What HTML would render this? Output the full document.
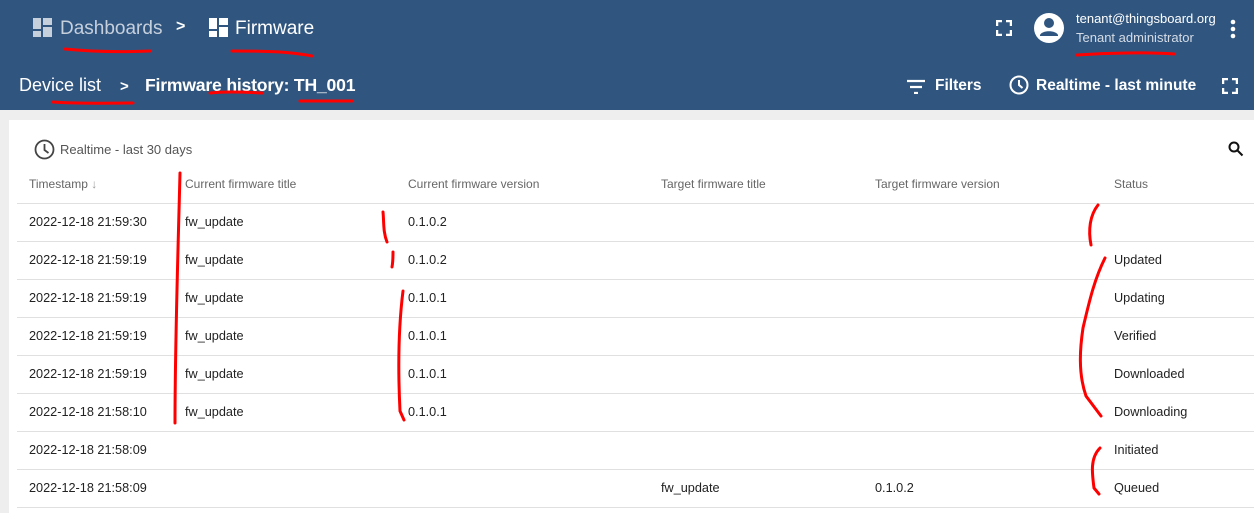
<!DOCTYPE html>
<html><head><style>
html,body{margin:0;width:1254px;height:513px;overflow:hidden;background:#eee;font-family:"Liberation Sans",sans-serif;position:relative}
.bar{position:absolute;left:0;top:0;width:1254px;height:110px;background:#305680;color:#fff}
.t{position:absolute;white-space:nowrap}
.card{position:absolute;left:9px;top:120px;width:1245px;height:393px;background:#fff}
.row{position:absolute;left:17px;width:1237px;border-top:1px solid #e0e0e0;height:37px}
.c{position:absolute;font-size:12.7px;color:#222;white-space:nowrap}
.h{position:absolute;font-size:12px;color:#666;top:177px;white-space:nowrap}
</style></head><body>
<div class="bar">
<svg class="t" style="left:33px;top:18px" width="20" height="20"><rect x="0" y="0" width="8" height="11" fill="#c6cfdc"/><rect x="10" y="0" width="9" height="7" fill="#c6cfdc"/><rect x="0" y="13" width="8" height="6" fill="#c6cfdc"/><rect x="10" y="9" width="9" height="10" fill="#c6cfdc"/></svg>
<div class="t" style="left:60px;top:18px;font-size:19px;color:#c6cfdc">Dashboards</div>
<div class="t" style="left:176px;top:18px;font-size:16px;font-weight:bold">&gt;</div>
<svg class="t" style="left:209px;top:18px" width="20" height="20"><rect x="0" y="0" width="8" height="11" fill="#fff"/><rect x="10" y="0" width="9" height="7" fill="#fff"/><rect x="0" y="13" width="8" height="6" fill="#fff"/><rect x="10" y="9" width="9" height="10" fill="#fff"/></svg>
<div class="t" style="left:235px;top:18px;font-size:19px">Firmware</div>
<div class="t" style="left:19px;top:75px;font-size:18px">Device list</div>
<div class="t" style="left:120px;top:78px;font-size:15px;font-weight:bold">&gt;</div>
<div class="t" style="left:145px;top:75px;font-size:17.6px;font-weight:bold;letter-spacing:-0.2px">Firmware history: TH_001</div>
<svg class="t" style="left:996px;top:20px" width="16" height="16" fill="none" stroke="#fff" stroke-width="2.5"><path d="M1 6V1h5M10 1h5v5M15 10v5h-5M6 15H1v-5"/></svg>
<svg class="t" style="left:1033px;top:12px" width="32" height="32"><circle cx="16" cy="16" r="15" fill="#fff"/><circle cx="16" cy="11" r="5" fill="#305680"/><path d="M7 23c2-5 16-5 18 0v1H7z" fill="#305680"/></svg>
<div class="t" style="left:1076px;top:11px;font-size:13px">tenant@thingsboard.org</div>
<div class="t" style="left:1076px;top:30px;font-size:13px;color:#d5dce6">Tenant administrator</div>
<svg class="t" style="left:1229px;top:19px" width="8" height="20" fill="#fff"><circle cx="4" cy="3" r="2.3"/><circle cx="4" cy="10" r="2.3"/><circle cx="4" cy="17" r="2.3"/></svg>
<svg class="t" style="left:906px;top:78px" width="20" height="16" stroke="#fff" stroke-width="2.2"><path d="M1 3h18M4 9h12M8 15h4"/></svg>
<div class="t" style="left:935px;top:77px;font-size:15.5px;font-weight:bold">Filters</div>
<svg class="t" style="left:1009px;top:75px" width="20" height="20" fill="none" stroke="#fff" stroke-width="2"><circle cx="10" cy="10" r="8.5"/><path d="M10 5v5l3.5 3"/></svg>
<div class="t" style="left:1036px;top:77px;font-size:15.5px;font-weight:bold">Realtime - last minute</div>
<svg class="t" style="left:1222px;top:78px" width="16" height="16" fill="none" stroke="#fff" stroke-width="2.5"><path d="M1 6V1h5M10 1h5v5M15 10v5h-5M6 15H1v-5"/></svg>
</div>
<div class="card"></div>
<svg class="t" style="left:34px;top:139px" width="21" height="21" fill="none" stroke="#444" stroke-width="1.8"><circle cx="10.5" cy="10.5" r="9"/><path d="M10.5 5v6l4 3"/></svg>
<div class="t" style="left:60px;top:142px;font-size:13px;color:#555">Realtime - last 30 days</div>
<svg class="t" style="left:1228px;top:141px" width="16" height="16" fill="none" stroke="#111" stroke-width="2"><circle cx="6" cy="6" r="4.5"/><path d="M9.5 9.5l5 5"/></svg>
<div class="h" style="left:29px">Timestamp <span style="color:#999">&#8595;</span></div>
<div class="h" style="left:185px">Current firmware title</div>
<div class="h" style="left:408px">Current firmware version</div>
<div class="h" style="left:661px">Target firmware title</div>
<div class="h" style="left:875px">Target firmware version</div>
<div class="h" style="left:1114px">Status</div>
<div class="row" style="top:203px"></div><div class="row" style="top:241px"></div><div class="row" style="top:279px"></div><div class="row" style="top:317px"></div><div class="row" style="top:355px"></div><div class="row" style="top:393px"></div><div class="row" style="top:431px"></div><div class="row" style="top:469px"></div><div class="row" style="top:507px;height:4px"></div>
<div class="c" style="left:29px;top:215px">2022-12-18 21:59:30</div><div class="c" style="left:185px;top:215px">fw_update</div><div class="c" style="left:408px;top:215px">0.1.0.2</div>
<div class="c" style="left:29px;top:253px">2022-12-18 21:59:19</div><div class="c" style="left:185px;top:253px">fw_update</div><div class="c" style="left:408px;top:253px">0.1.0.2</div><div class="c" style="left:1114px;top:253px">Updated</div>
<div class="c" style="left:29px;top:291px">2022-12-18 21:59:19</div><div class="c" style="left:185px;top:291px">fw_update</div><div class="c" style="left:408px;top:291px">0.1.0.1</div><div class="c" style="left:1114px;top:291px">Updating</div>
<div class="c" style="left:29px;top:329px">2022-12-18 21:59:19</div><div class="c" style="left:185px;top:329px">fw_update</div><div class="c" style="left:408px;top:329px">0.1.0.1</div><div class="c" style="left:1114px;top:329px">Verified</div>
<div class="c" style="left:29px;top:367px">2022-12-18 21:59:19</div><div class="c" style="left:185px;top:367px">fw_update</div><div class="c" style="left:408px;top:367px">0.1.0.1</div><div class="c" style="left:1114px;top:367px">Downloaded</div>
<div class="c" style="left:29px;top:405px">2022-12-18 21:58:10</div><div class="c" style="left:185px;top:405px">fw_update</div><div class="c" style="left:408px;top:405px">0.1.0.1</div><div class="c" style="left:1114px;top:405px">Downloading</div>
<div class="c" style="left:29px;top:443px">2022-12-18 21:58:09</div><div class="c" style="left:1114px;top:443px">Initiated</div>
<div class="c" style="left:29px;top:481px">2022-12-18 21:58:09</div><div class="c" style="left:661px;top:481px">fw_update</div><div class="c" style="left:875px;top:481px">0.1.0.2</div><div class="c" style="left:1114px;top:481px">Queued</div>
<svg style="position:absolute;left:0;top:0" width="1254" height="513" fill="none" stroke="#f00" stroke-width="3" stroke-linecap="round">
<path d="M65 49c30 3 60 3 85 2"/><path d="M232 51c25 0 55 0 80 5"/>
<path d="M53 102c25 2 55 1 80 1"/><path d="M210 93c15-2 35-1 52 0"/><path d="M300 101c15 0 40 0 52 0"/>
<path d="M1077 55c30-2 70-3 97-1"/>
<path d="M180 173c-2 80-5 170-5 250"/>
<path d="M383 212c1 10 0 20 4 30"/><path d="M393 252c0 5 0 10-1 15"/>
<path d="M403 291c-5 40-5 80-3 120l4 9"/>
<path d="M1098 205c-8 10-10 25-7 40"/>
<path d="M1105 258c-10 20-15 40-22 70c-3 20-5 45 3 68l15 20"/>
<path d="M1100 448c-10 10-8 25-6 40l5 6"/>
</svg>
</body></html>
